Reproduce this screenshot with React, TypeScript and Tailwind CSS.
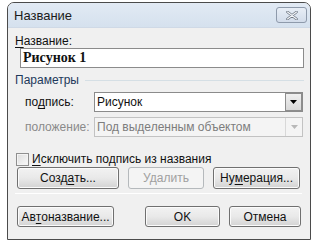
import React from 'react';

const font = { fontFamily: '"Liberation Sans", Arial, sans-serif' };

const U: React.FC<{ children: React.ReactNode }> = ({ children }) => (
  <span className="underline underline-offset-2">{children}</span>
);

interface BtnProps {
  w: string;
  disabled?: boolean;
  children: React.ReactNode;
}

const Btn: React.FC<BtnProps> = ({ w, disabled, children }) => (
  <button
    className={
      disabled
        ? `${w} h-full rounded-[3px] border border-[#b5b9bc] bg-[#f4f4f4] text-[12px] text-[#a0a0a0] flex items-center justify-center`
        : `${w} h-full rounded-[3px] border border-[#707070] bg-gradient-to-b from-[#f2f2f2] via-[#e9e9e9] to-[#d3d3d3] text-[12px] text-[#111] flex items-center justify-center shadow-[inset_0_0_0_1px_#fbfbfb]`
    }
  >
    {children}
  </button>
);

const Arrow: React.FC<{ disabled?: boolean }> = ({ disabled }) => (
  <div
    className={
      disabled
        ? 'w-[17px] h-full border-l border-[#d8d8d8] bg-[#f4f4f4] flex items-center justify-center'
        : 'w-[17px] h-full border border-[#8d8d8d] bg-gradient-to-b from-[#f0f0f0] to-[#d8d8d8] flex items-center justify-center'
    }
  >
    <svg width="7" height="4" viewBox="0 0 7 4">
      <path d="M0 0h7L3.5 4z" fill={disabled ? '#b8b8b8' : '#000'} />
    </svg>
  </div>
);

export default function App() {
  return (
    <div className="w-[320px] h-[247px] bg-white pt-[2px] pl-[7px]" style={font}>
      <div className="w-[304px] h-[238px] border border-[#4b4b4b] rounded-t-[7px] overflow-hidden bg-[#f0f0f0] flex flex-col">
        {/* title bar */}
        <div className="h-[25px] bg-gradient-to-b from-[#e2eaf4] to-[#d5e1ee] flex items-start justify-between border-b border-[#cfd9e6]">
          <span className="pl-[6px] pt-[5px] text-[13px] leading-[15px] text-[#1b1b1b]">Название</span>
          <div className="mt-[4px] mr-[3px] w-[31px] h-[16px] rounded-[3px] border border-[#8e9aab] bg-gradient-to-b from-[#e8eef6] to-[#d2dcea] flex items-center justify-center">
            <svg width="12" height="9" viewBox="0 0 12 9">
              <path d="M1.5 1l9 7M10.5 1l-9 7" stroke="#6e7784" strokeWidth="2.6" strokeLinecap="round" />
              <path d="M1.5 1l9 7M10.5 1l-9 7" stroke="#f4f6f9" strokeWidth="1.1" strokeLinecap="round" />
            </svg>
          </div>
        </div>

        {/* body */}
        <div className="flex flex-col text-[12px] text-[#111]">
          <div className="mt-[6px] pl-[7px] h-[14px] leading-[14px]">
            <U>Н</U>азвание:
          </div>
          <div className="ml-[12px] w-[284px] h-[20px] border border-[#8b8b8b] bg-white flex items-center pl-[2px]">
            <span className="font-bold text-[14px] leading-[16px]" style={{ fontFamily: '"Liberation Serif", "Times New Roman", serif' }}>
              Рисунок 1
            </span>
          </div>

          <div className="mt-[5px] pl-[7px] h-[14px] leading-[14px] flex items-center">
            <span className="text-[#1e395b]">Параметры</span>
            <div className="ml-[6px] mr-[6px] flex-1 h-px bg-[#d5dfe5]" />
          </div>

          <div className="mt-[5px] h-[20px] flex items-center">
            <span className="pl-[17px] w-[86px]">
              по<U>д</U>пись:
            </span>
            <div className="w-[209px] h-full border border-[#8b8b8b] bg-white flex items-center justify-between">
              <span className="pl-[2px]">Рисунок</span>
              <Arrow />
            </div>
          </div>

          <div className="mt-[5px] h-[20px] flex items-center">
            <span className="pl-[17px] w-[86px] text-[#8a8a8a]">положение:</span>
            <div className="w-[209px] h-full border border-[#c2c2c2] bg-[#f4f4f4] flex items-center justify-between">
              <span className="pl-[2px] text-[#7d7d7d]">Под выделенным объектом</span>
              <Arrow disabled />
            </div>
          </div>

          <div className="mt-[15px] h-[14px] flex items-center">
            <div className="ml-[8px] w-[13px] h-[13px] border border-[#8f8f8f] bg-gradient-to-br from-[#dcdcdc] to-[#fafafa] shadow-[inset_0_0_0_1px_#f4f4f4]" />
            <span className="ml-[3px] leading-[14px]">
              <U>И</U>сключить подпись из названия
            </span>
          </div>

          <div className="mt-[1px] h-[22px] flex pl-[9px]">
            <Btn w="w-[102px]">
              Созд<U>а</U>ть...
            </Btn>
            <div className="ml-[9px]">
              <Btn w="w-[76px]" disabled>
                Удалить
              </Btn>
            </div>
            <div className="ml-[9px]">
              <Btn w="w-[87px]">
                Ну<U>м</U>ерация...
              </Btn>
            </div>
          </div>

          <div className="mt-[4px] ml-[7px] mr-[8px] h-px bg-[#d5dfe5] border-b border-white" />

          <div className="mt-[12px] h-[21px] flex pl-[9px]">
            <Btn w="w-[97px]">
              Ав<U>т</U>оназвание...
            </Btn>
            <div className="ml-[31px]">
              <Btn w="w-[75px]">OK</Btn>
            </div>
            <div className="ml-[9px]">
              <Btn w="w-[72px]">Отмена</Btn>
            </div>
          </div>
        </div>
      </div>
    </div>
  );
}
